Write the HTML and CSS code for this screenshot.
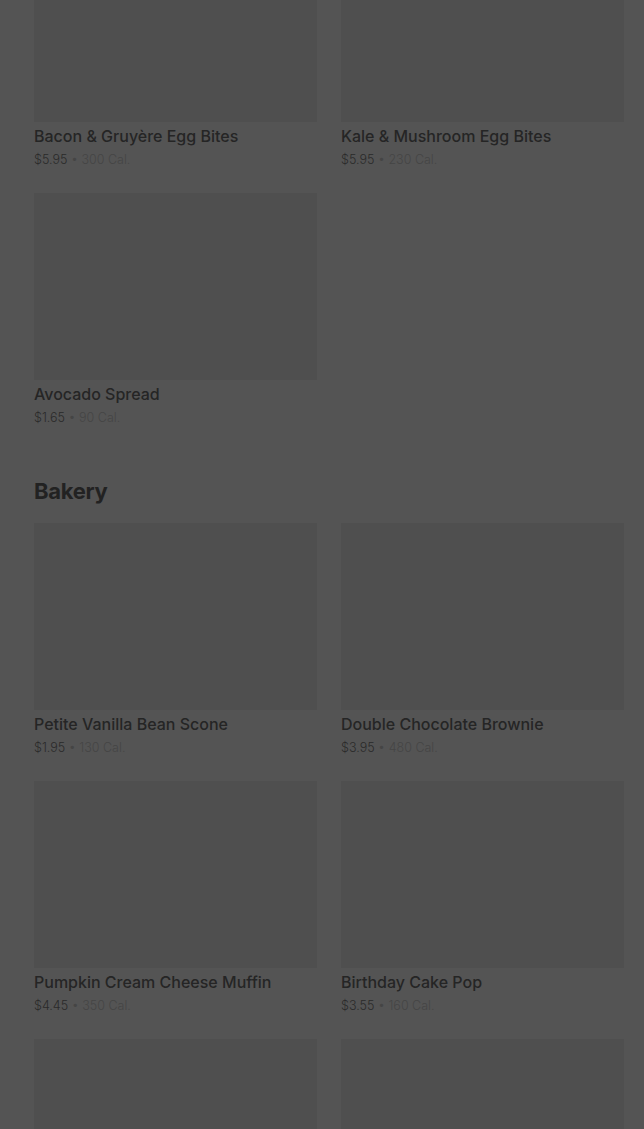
FILE: index.html
```html
<!DOCTYPE html>
<html lang="en">
<head>
    <meta charset="UTF-8">
    <meta name="viewport" content="width=device-width, initial-scale=1.0">
    <title>Menu</title>
    <link rel="stylesheet" href="styles.css">
</head>
<body>
    <main class="menu">
        <section class="menu_section menu_section--cut">
            <div class="menu_grid">
                <div class="product">
                    <div class="product_image"></div>
                    <div class="product_name">Bacon &amp; Gruyère Egg Bites</div>
                    <div class="product_meta"><span class="product_price">$5.95</span> • 300 Cal.</div>
                </div>
                <div class="product">
                    <div class="product_image"></div>
                    <div class="product_name">Kale &amp; Mushroom Egg Bites</div>
                    <div class="product_meta"><span class="product_price">$5.95</span> • 230 Cal.</div>
                </div>
                <div class="product">
                    <div class="product_image"></div>
                    <div class="product_name">Avocado Spread</div>
                    <div class="product_meta"><span class="product_price">$1.65</span> • 90 Cal.</div>
                </div>
            </div>
        </section>
        <section class="menu_section">
            <h2 class="menu_title">Bakery</h2>
            <div class="menu_grid">
                <div class="product">
                    <div class="product_image"></div>
                    <div class="product_name">Petite Vanilla Bean Scone</div>
                    <div class="product_meta"><span class="product_price">$1.95</span> • 130 Cal.</div>
                </div>
                <div class="product">
                    <div class="product_image"></div>
                    <div class="product_name">Double Chocolate Brownie</div>
                    <div class="product_meta"><span class="product_price">$3.95</span> • 480 Cal.</div>
                </div>
                <div class="product">
                    <div class="product_image"></div>
                    <div class="product_name">Pumpkin Cream Cheese Muffin</div>
                    <div class="product_meta"><span class="product_price">$4.45</span> • 350 Cal.</div>
                </div>
                <div class="product">
                    <div class="product_image"></div>
                    <div class="product_name">Birthday Cake Pop</div>
                    <div class="product_meta"><span class="product_price">$3.55</span> • 160 Cal.</div>
                </div>
                <div class="product">
                    <div class="product_image"></div>
                </div>
                <div class="product">
                    <div class="product_image"></div>
                </div>
            </div>
        </section>
    </main>
</body>
</html>
```

FILE: styles.css
```css
html, body {
    height: 100%;
    overflow: hidden;
}
body {
    margin: 0;
    background-color: #545454;
    color: #232323;
    font-family: Inter, "Noto Sans", sans-serif;
}
.menu {
    padding: 0 20px 0 34px;
}
.menu_section--cut {
    margin-top: -65px;
}
.menu_grid {
    display: grid;
    grid-template-columns: 1fr 1fr;
    column-gap: 24px;
    row-gap: 22px;
}
.menu_title {
    margin: 47px 0 17px;
    font-size: 22px;
    line-height: 30px;
    font-weight: 700;
    letter-spacing: -0.3px;
    color: #222;
}
.product_image {
    height: 187px;
    background-color: #4f4f4f;
}
.product_name {
    margin-top: 3px;
    font-size: 16px;
    line-height: 22px;
    font-weight: 500;
    color: #252525;
}
.product_meta {
    margin-top: 2px;
    font-size: 12.5px;
    line-height: 22px;
    font-weight: 300;
    color: #454545;
}
.product_price {
    color: #2a2a2a;
}
```
